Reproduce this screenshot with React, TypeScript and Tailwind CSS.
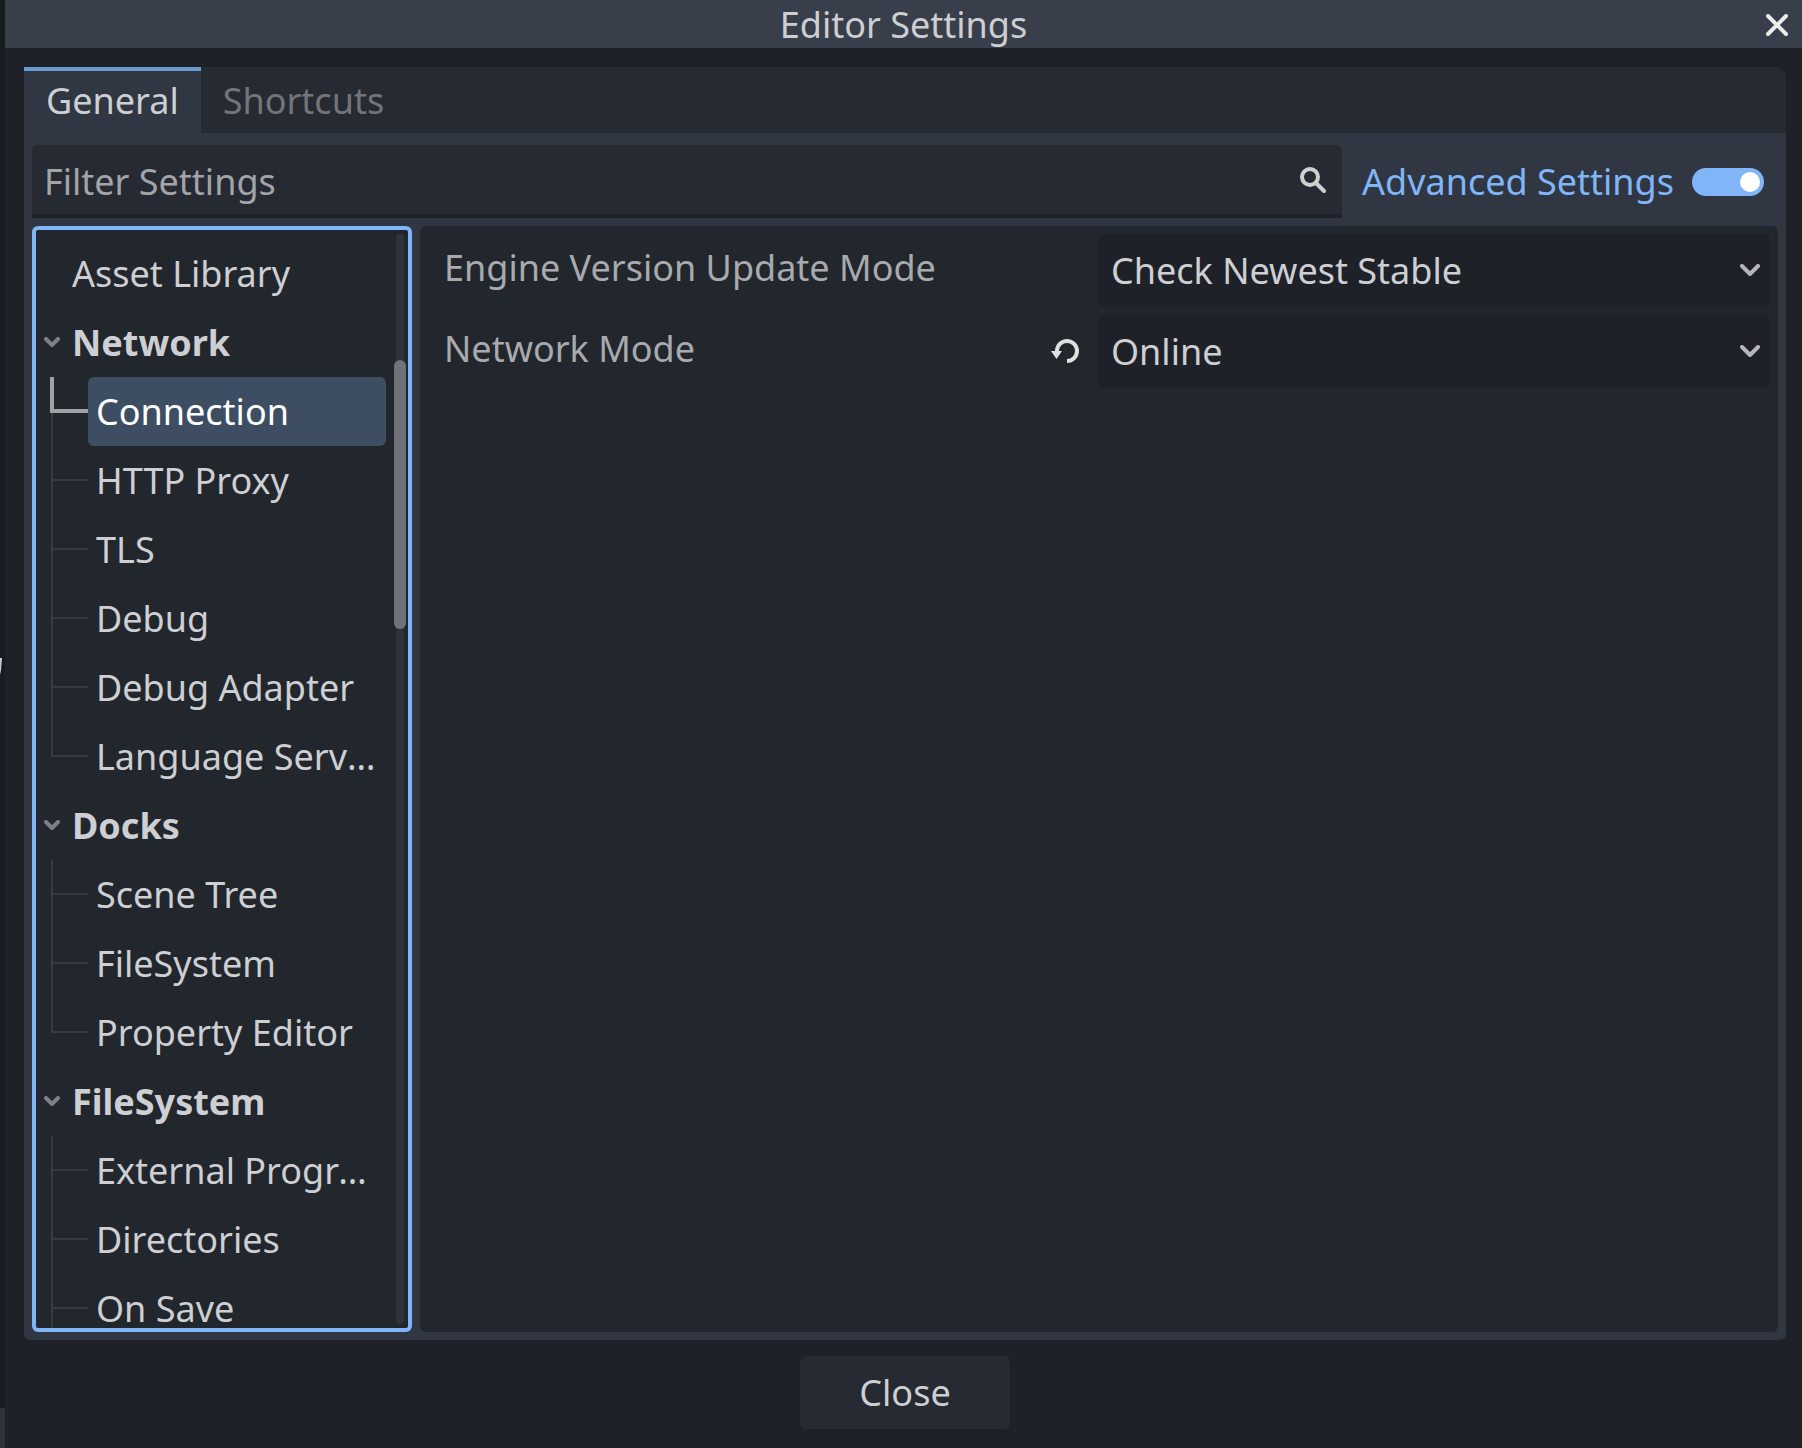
import { useState } from "react"

const sections = [
  { title: null, items: ["Asset Library"] },
  {
    title: "Network",
    items: [
      "Connection",
      "HTTP Proxy",
      "TLS",
      "Debug",
      "Debug Adapter",
      "Language Server",
    ],
  },
  { title: "Docks", items: ["Scene Tree", "FileSystem", "Property Editor"] },
  {
    title: "FileSystem",
    items: ["External Programs", "Directories", "On Save"],
    more: true,
  },
]

function Chevron({ className }: { className: string }) {
  return (
    <svg
      className={className}
      viewBox="0 0 20 12"
      fill="none"
      stroke="currentColor"
      strokeWidth="4"
      strokeLinecap="round"
      strokeLinejoin="round"
    >
      <path d="M2 2l8 8 8-8" />
    </svg>
  )
}

function TreeItem({ name, last, selected, onSelect }) {
  return (
    <li className="flex h-[69px]">
      <span className="ml-[15px] flex w-[37px] shrink-0 flex-col">
        <span
          className={
            selected
              ? "-ml-px h-9 border-b-4 border-l-4 border-[#a0a1a4]"
              : "h-[35px] border-b-2 border-l-2 border-[#383b42]"
          }
        />
        {!last && <span className="flex-1 border-l-2 border-[#383b42]" />}
      </span>
      <button
        onClick={onSelect}
        className={
          "min-w-0 flex-1 truncate rounded-md px-2 text-left " +
          (selected ? "bg-[#3d4e63] text-white" : "")
        }
      >
        {name}
      </button>
    </li>
  )
}

function Section({ title, items, more, selected, onSelect }) {
  if (!title) {
    return (
      <ul>
        {items.map((name) => (
          <li key={name} className="flex h-[69px]">
            <button className="flex-1 pl-9 text-left">{name}</button>
          </li>
        ))}
      </ul>
    )
  }

  return (
    <div>
      <button className="flex h-[69px] w-full items-center gap-3 pl-2 text-left font-bold">
        <svg
          className="h-[11px] w-4 text-[#7f8185]"
          viewBox="0 0 16 11"
          fill="none"
          stroke="currentColor"
          strokeWidth="4"
          strokeLinecap="round"
          strokeLinejoin="round"
        >
          <path d="M2 2l6 6 6-6" />
        </svg>
        {title}
      </button>
      <ul>
        {items.map((name, i) => (
          <TreeItem
            key={name}
            name={name}
            last={i === items.length - 1 && !more}
            selected={selected === name}
            onSelect={() => onSelect(name)}
          />
        ))}
      </ul>
    </div>
  )
}

function SettingRow({ id, label, options, changed }) {
  return (
    <div className="flex h-[73px]">
      <div className="flex w-1/2 items-center justify-between pr-5 pb-[6px] pl-4">
        <label htmlFor={id} className="text-[#a8aaad]">
          {label}
        </label>
        {changed && (
          <button aria-label="Reset to default">
            <svg className="mt-[6px] h-7 w-7" viewBox="0 0 28 28" fill="none">
              <path
                d="M6 15V13a10 10 0 1 1 10 10"
                stroke="#e0e0e0"
                strokeWidth="4"
              />
              <path d="M0 13h11l-5.5 8z" fill="#e0e0e0" />
            </svg>
          </button>
        )}
      </div>
      <div className="relative w-1/2">
        <select
          id={id}
          className="h-full w-full appearance-none rounded-md bg-[#1e2128] px-3"
        >
          {options.map((option) => (
            <option key={option}>{option}</option>
          ))}
        </select>
        <Chevron className="pointer-events-none absolute top-[30px] right-[10px] h-3 w-5 text-[#b5b6b9]" />
      </div>
    </div>
  )
}

export default function App() {
  const [selected, setSelected] = useState("Connection")
  const [advanced, setAdvanced] = useState(true)

  return (
    <div className="flex h-screen overflow-hidden bg-[#1e2128] font-['Noto_Sans',sans-serif] text-[36px] leading-[49px] text-[#cdcfd2]">
      {/* sliver of the main window behind the dialog */}
      <div className="flex w-[5px] shrink-0 flex-col justify-between bg-[#191c1f]">
        <span />
        <svg className="mb-[74px] h-5 w-[5px]" viewBox="0 0 5 20">
          <path d="M0 1h2l-1 12-1 5z" fill="#cdcfd2" />
        </svg>
        <span className="h-10 bg-[#2d323c]" />
      </div>

      <div className="flex min-w-0 flex-1 flex-col">
        <header className="grid h-12 shrink-0 grid-cols-[1fr_auto_1fr] items-center bg-[#383e4a]">
          <h1 className="col-start-2">Editor Settings</h1>
          <button aria-label="Close window" className="mr-[14px] justify-self-end">
            <svg
              className="h-[22px] w-[22px]"
              viewBox="0 0 22 22"
              stroke="#ededee"
              strokeWidth="4"
              strokeLinecap="round"
            >
              <path d="M2 2l18 18M20 2L2 20" />
            </svg>
          </button>
        </header>

        <main className="flex min-h-0 flex-1 flex-col gap-4 pt-[19px] pr-4 pb-[19px] pl-[19px]">
          <div className="flex min-h-0 flex-1 flex-col overflow-hidden rounded-tr-xl rounded-b-md bg-[#303642]">
            <nav className="flex h-[66px] shrink-0 bg-[#262a32]">
              <button className="border-t-4 border-[#699ad0] bg-[#303642] px-[22px] pb-1">
                General
              </button>
              <button className="px-[22px] text-[#727579]">Shortcuts</button>
            </nav>

            <div className="flex min-h-0 flex-1 flex-col gap-2 px-2 pt-3 pb-2">
              <div className="flex h-[73px] shrink-0">
                <div className="flex min-w-0 flex-1 items-center rounded-t-md border-b-4 border-[#1e2128] bg-[#262a32] pr-[15px] pl-3">
                  <input
                    type="text"
                    aria-label="Filter Settings"
                    placeholder="Filter Settings"
                    className="min-w-0 flex-1 bg-transparent pt-1 outline-none placeholder:text-[#a2a4a8]"
                  />
                  <svg
                    className="h-7 w-7"
                    viewBox="0 0 28 28"
                    fill="none"
                    stroke="#cfcfd0"
                  >
                    <circle cx="11" cy="11" r="8" strokeWidth="4" />
                    <path d="M17 17l8 8" strokeWidth="4" strokeLinecap="round" />
                  </svg>
                </div>
                <label className="flex items-center gap-[18px] pr-[14px] pl-5 text-[#80b6f8]">
                  Advanced Settings
                  <input
                    type="checkbox"
                    checked={advanced}
                    onChange={(e) => setAdvanced(e.target.checked)}
                    className="flex h-7 w-[72px] appearance-none items-center rounded-full bg-[#4b4f58] px-1 before:size-5 before:rounded-full before:bg-white checked:justify-end checked:bg-[#80b6f8]"
                  />
                </label>
              </div>

              <div className="flex min-h-0 flex-1 gap-2">
                <aside className="flex w-[380px] shrink-0 overflow-hidden rounded-md border-4 border-[#80b6f8] bg-[#22262d]">
                  <div className="min-w-0 flex-1 overflow-hidden pt-[9px]">
                    {sections.map((section, i) => (
                      <Section
                        key={i}
                        title={section.title}
                        items={section.items}
                        more={section.more}
                        selected={selected}
                        onSelect={setSelected}
                      />
                    ))}
                  </div>
                  <div className="my-1 mr-1 ml-[10px] flex w-2 justify-center rounded-full bg-[#303339]">
                    <span className="mt-[126px] h-[269px] w-3 shrink-0 rounded-full bg-[#6f7276]" />
                  </div>
                </aside>

                <section className="flex min-w-0 flex-1 flex-col gap-2 rounded-md bg-[#22262d] p-2">
                  <SettingRow
                    id="update-mode"
                    label="Engine Version Update Mode"
                    options={["Check Newest Stable", "Disable Update Checks"]}
                    changed={false}
                  />
                  <SettingRow
                    id="network-mode"
                    label="Network Mode"
                    options={["Online", "Offline"]}
                    changed={true}
                  />
                </section>
              </div>
            </div>
          </div>

          <button className="h-[73px] w-[210px] shrink-0 self-center rounded-md bg-[#262a32]">
            Close
          </button>
        </main>
      </div>
    </div>
  )
}
